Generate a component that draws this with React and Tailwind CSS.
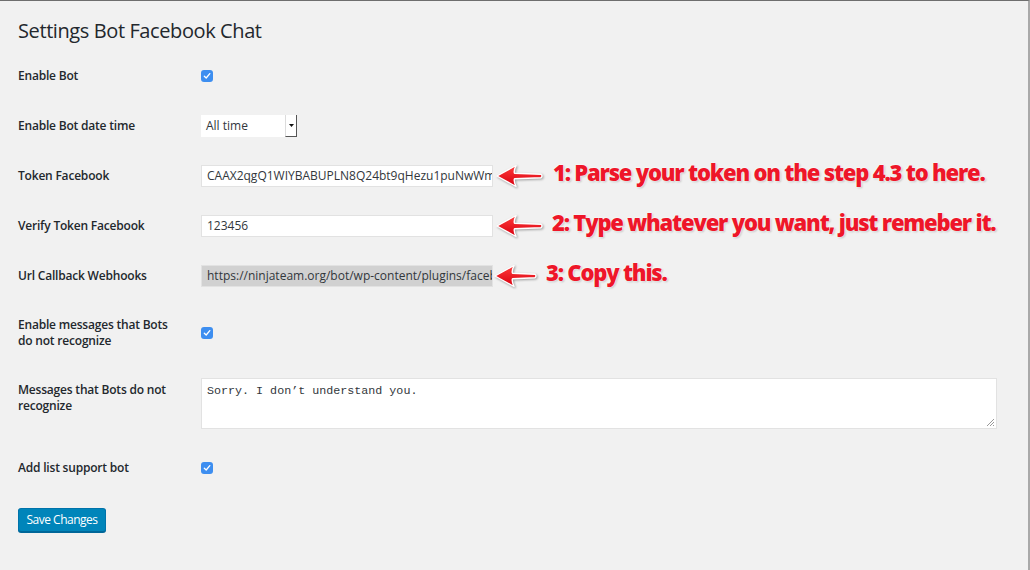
import React from 'react';

function Check() {
  return (
    <span className="w-[12px] h-[12px] rounded-[3px] bg-[#3d8ef0] flex items-center justify-center">
      <svg width="8" height="8" viewBox="0 0 8 8">
        <path d="M1.3 4.2 L3.2 6 L6.8 1.6" fill="none" stroke="#fff" strokeWidth="1.3" strokeLinecap="round" strokeLinejoin="round" />
      </svg>
    </span>
  );
}

function Arrow({ len = 46 }) {
  const w = len + 4;
  return (
    <svg width={w} height="26" viewBox={`0 0 ${w} 26`} className="shrink-0 drop-shadow-[1px_1px_1px_rgba(0,0,0,0.35)]">
      <defs>
        <linearGradient id="ag" x1="0" y1="0" x2="0" y2="1">
          <stop offset="0" stopColor="#ff3b3b" />
          <stop offset="1" stopColor="#d8000f" />
        </linearGradient>
      </defs>
      <path
        d={`M2 13 L21 2.5 Q18.5 8 19.5 10.2 L${len} 11.3 Q${len + 2} 13 ${len} 14.7 L19.5 15.8 Q18.5 18 21 23.5 Z`}
        fill="url(#ag)"
        stroke="#fff"
        strokeWidth="1.4"
        strokeLinejoin="round"
      />
    </svg>
  );
}

function Note({ children, len, gap, textGap }) {
  return (
    <div className={`flex items-center shrink-0 ${gap}`}>
      <Arrow len={len} />
      <span className={`${textGap} pb-[8px] text-[22px] leading-none font-extrabold tracking-[-1.2px] text-[#ee1629] whitespace-nowrap [text-shadow:0_0_2px_#fff,0_0_2px_#fff,1px_1px_2px_rgba(0,0,0,0.25)]`}>
        {children}
      </span>
    </div>
  );
}

const label = 'w-[183px] shrink-0 text-[12px] leading-[16px] font-semibold tracking-[-0.2px] text-[#23282d]';
const input = 'w-[292px] h-[22px] shrink-0 border border-[#e2e2e2] px-[5px] flex items-center text-[12px] text-[#32373c] overflow-hidden whitespace-nowrap';

export default function App() {
  return (
    <div className="w-[1030px] h-[570px] bg-[#f1f1f1] border-t border-t-[#6e6e6e] border-r-2 border-r-[#a9a9a9] font-['Open_Sans',sans-serif] overflow-hidden">
      <div className="pl-[18px]">
        <h1 className="mt-[15px] text-[20px] leading-[30px] tracking-[-0.4px] text-[#23282d] font-normal">Settings Bot Facebook Chat</h1>

        <div className="h-[50px] flex items-center mt-[5px]">
          <div className={label}>Enable Bot</div>
          <Check />
        </div>

        <div className="h-[50px] flex items-center">
          <div className={label}>Enable Bot date time</div>
          <div className="w-[96px] h-[22px] bg-white flex items-center text-[12px] text-[#32373c]">
            <span className="flex-1 pl-[5px]">All time</span>
            <span className="w-[12px] h-full border-l border-l-[#dcdcdc] border-r-[1.5px] border-b-[1.5px] border-r-[#555] border-b-[#555] flex items-center justify-center">
              <svg width="5" height="3" viewBox="0 0 5 3"><path d="M0 0 H5 L2.5 3 Z" fill="#111" /></svg>
            </span>
          </div>
        </div>

        <div className="h-[50px] flex items-center">
          <div className={label}>Token Facebook</div>
          <div className={`${input} bg-white`}>CAAX2qgQ1WIYBABUPLN8Q24bt9qHezu1puNwWmoZBZAw</div>
          <Note len={46} gap="ml-[2px]" textGap="ml-[8px]">1: Parse your token on the step 4.3 to here.</Note>
        </div>

        <div className="h-[50px] flex items-center">
          <div className={label}>Verify Token Facebook</div>
          <div className={`${input} bg-white`}>123456</div>
          <Note len={46} gap="ml-[2px]" textGap="ml-[7px]">2: Type whatever you want, just remeber it.</Note>
        </div>

        <div className="h-[50px] flex items-center">
          <div className={label}>Url Callback Webhooks</div>
          <div className={`${input} bg-[#d1d1d1] border-[#d1d1d1]`}>https://ninjateam.org/bot/wp-content/plugins/facebook-bot</div>
          <Note len={42} gap="ml-[0px]" textGap="ml-[7px]">3: Copy this.</Note>
        </div>

        <div className="h-[64px] flex items-center">
          <div className={label}>Enable messages that Bots<br />do not recognize</div>
          <Check />
        </div>

        <div className="flex items-start pt-[13px]">
          <div className={`${label} pt-[4px]`}>Messages that Bots do not<br />recognize</div>
          <div className="relative w-[796px] h-[51px] bg-white border border-[#e2e2e2] px-[5px] pt-[4px] font-['Liberation_Mono',monospace] text-[11.7px] leading-[16px] text-[#32373c]">
            Sorry. I don’t understand you.
            <svg width="9" height="9" viewBox="0 0 9 9" className="absolute right-[1px] bottom-[1px]">
              <path d="M8 1 L1 8 M8 4 L4 8 M8 7 L7 8" stroke="#9a9a9a" strokeWidth="1" />
            </svg>
          </div>
        </div>

        <div className="h-[50px] flex items-center mt-[14px]">
          <div className={label}>Add list support bot</div>
          <Check />
        </div>

        <button className="mt-[15px] w-[88px] h-[24px] rounded-[3px] bg-[#0085ba] border border-[#0073aa] border-b-[#006799] shadow-[0_1px_0_#006799] text-white text-[12px] tracking-[-0.5px] leading-none">
          Save Changes
        </button>
      </div>
    </div>
  );
}
